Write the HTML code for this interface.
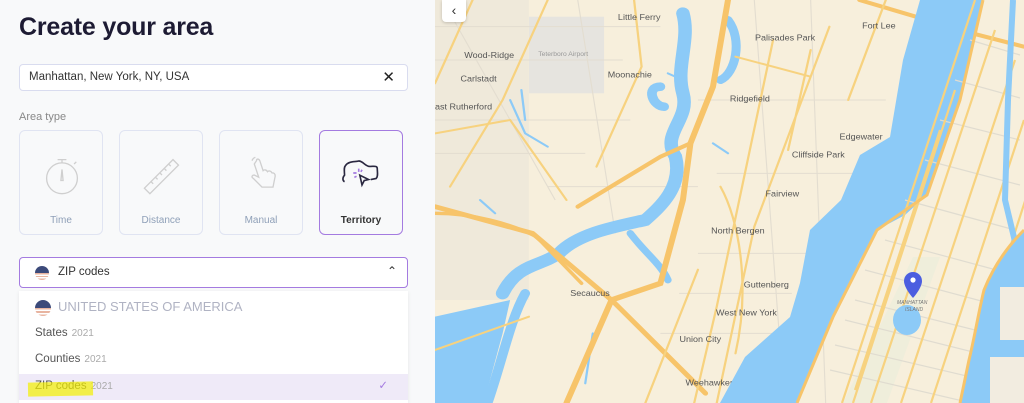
<!DOCTYPE html>
<html><head><meta charset="utf-8"><style>
*{margin:0;padding:0;box-sizing:border-box}
html,body{width:1024px;height:403px;overflow:hidden}
body{font-family:"Liberation Sans",sans-serif;position:relative;background:#f8f9fa}
#left{position:absolute;left:0;top:0;width:435px;height:403px;background:#f8f9fa;overflow:hidden}
h1{position:absolute;left:19px;top:13px;font-size:25px;font-weight:bold;color:#1d1b33;letter-spacing:-0.2px}
.inp{position:absolute;left:19px;top:64px;width:389px;height:27px;background:#fff;border:1px solid #d9dcef;border-radius:4px;font-size:11.5px;color:#333;padding:6px 9px}
.inp .x{position:absolute;right:12px;top:3px;font-size:15px;color:#222}
.lbl{position:absolute;left:19px;top:111px;font-size:11px;color:#888}
.card{position:absolute;top:130px;width:84px;height:105px;border:1px solid #e0e4f2;border-radius:6px;background:#f8f9fa;text-align:center;font-size:10px;color:#8fa0b8}
.card span{position:absolute;left:0;right:0;top:84px}
.card svg{position:absolute;left:20px;top:22px}
.card.sel{border:1.5px solid #a47be0;color:#333;font-weight:bold}
.sel2{position:absolute;left:19px;top:257px;width:389px;height:31px;background:#fff;border:1.5px solid #a47be0;border-radius:4px;font-size:11.5px;color:#333;padding:8px 0 0 38px}
.flag{position:absolute;width:14px;height:14px;border-radius:50%;background:linear-gradient(#3c4a7a 0 50%,#e8b4a0 50% 60%,#fff 60% 70%,#e8b4a0 70% 80%,#fff 80% 90%,#e8b4a0 90%)}
.menu{position:absolute;left:19px;top:291px;width:389px;height:112px;background:#fff;box-shadow:0 1px 4px rgba(0,0,0,.08)}
.menu div{position:absolute;left:0;right:0;font-size:11.5px;color:#555;padding-left:16px}
.menu small{font-size:10px;color:#aaa;margin-left:4px}
.hl{background:#efeaf8}
.hlm{position:absolute;left:28px;top:382px;width:65px;height:14px;background:#f4f000;transform:rotate(-1deg)}
#map{position:absolute;left:435px;top:0;width:589px;height:403px;background:#f7efdc;overflow:hidden}
#map svg{position:absolute;left:0;top:0}
.back{position:absolute;left:442px;top:0;width:24px;height:22px;background:#fff;border-radius:0 0 4px 4px;box-shadow:0 1px 3px rgba(0,0,0,.2);text-align:center;font-size:14px;line-height:20px;color:#333}
</style></head><body>
<div id="left">
<h1>Create your area</h1>
<div class="inp">Manhattan, New York, NY, USA<span class="x">✕</span></div>
<div class="lbl">Area type</div>
<div class="card" style="left:19px"><svg width="44" height="44" viewBox="0 0 40 40" fill="none" stroke="#cfcfcf" stroke-width="1.2"><circle cx="20" cy="23" r="14"/><path d="M16 6h8M20 6v3M20 15l-1 10h2z M31 10l2-2"/></svg><span>Time</span></div>
<div class="card" style="left:119px"><svg width="44" height="44" viewBox="0 0 40 40" fill="none" stroke="#cfcfcf" stroke-width="1.2"><path d="M4 32l26-26 5 5-26 26z M12 28l-2-2M16 24l-2-2M20 20l-2-2M24 16l-2-2M28 12l-2-2"/></svg><span>Distance</span></div>
<div class="card" style="left:219px"><svg width="44" height="44" viewBox="0 0 40 40" fill="none" stroke="#cfcfcf" stroke-width="1.2"><path d="M14 4a4 4 0 0 0-3 3 M13 10l4 12-4-2c-2 0-3 2-1 3l8 8h10l2-10c0-3-2-3-3-3-1-2-3-2-4-1-1-2-3-2-4-1l-3-9c-1-2-3-2-3 0z"/></svg><span>Manual</span></div>
<div class="card sel" style="left:319px"><svg width="48" height="44" viewBox="0 0 44 40" fill="none" stroke="#2a2840" stroke-width="1.5" style="left:18px;top:20px"><path d="M6 28c-2-1-2-4 0-6 0-3-1-7 1-9 3-4 8-3 12-4 4 0 6 5 10 5 4 0 7-1 7 2 0 3 1 7-1 9l-5 1"/><path d="M20 22l8 4-4 1-2 4z" /><path d="M19 16v3M14 20h3M15 24l2-1M22 17l-1 2" stroke="#a47be0"/></svg><span>Territory</span></div>
<div class="sel2"><i class="flag" style="left:15px;top:8px"></i>ZIP codes<span style="position:absolute;right:10px;top:6px;font-size:12px">&#8963;</span></div>
<div class="menu">
<div style="top:8px;font-size:13px;color:#b0b3c3;padding-left:39px"><i class="flag" style="left:16px;top:1px;width:16px;height:16px"></i>UNITED STATES OF AMERICA</div>
<div style="top:36px">States<small>2021</small></div>
<div style="top:62px">Counties<small>2021</small></div>
<div class="hl" style="top:83px;height:26px;padding-top:6px">ZIP codes<small>2021</small><span style="position:absolute;right:20px;top:4px;color:#a47be0">✓</span></div>
</div>
<div class="hlm" style="opacity:.7"></div>
</div>
<div id="map">
<svg width="589" height="403" viewBox="0 0 1568 1209" preserveAspectRatio="none">
<rect width="1568" height="1209" fill="#f7efdc"/>
<rect x="250" y="50" width="200" height="230" fill="#e6e4df"/>
<path d="M0 0h250v900H0z" fill="#efe9da"/>
<g fill="none" stroke="#e3ddd0" stroke-width="3">
<path d="M0 80h600M0 180h500M0 360h520M0 460h400M300 560h400M700 300h500M750 520h400M700 760h400M650 880h300M600 1000h400M20 0l300 600M380 0l100 700M850 0l80 1209M1000 0l40 1209"/>
</g>
<g fill="#8ccaf7">
<path d="M0 950L200 900 180 1000 130 1209H0z"/>
</g>
<g fill="none" stroke="#8ccaf7" stroke-linecap="round">
<path d="M660 40C680 120 640 200 660 280 680 360 600 400 640 470 660 560 600 620 560 660 480 680 380 700 330 760 280 800 220 790 180 880" stroke-width="36"/>
<path d="M780 60c40 60 20 160 -20 180" stroke-width="24"/>
<path d="M600 260c-40 0-20 60 10 60" stroke-width="26"/>
<path d="M520 700c40 60 80 90 100 140" stroke-width="20"/>
<path d="M240 880c-40 80-60 200-100 329" stroke-width="26"/>
<path d="M200 300l40 100 60 40M120 600l40 40M420 1000l-20 150M230 270l10 90M660 240l-40-20M740 430l40 30" stroke-width="6"/>
</g>
<g fill="none" stroke="#f7c46a" stroke-linecap="round">
<path d="M780 0L740 260 680 430 660 600 600 850 470 900 350 1209" stroke-width="16"/>
<path d="M0 620L260 700 470 900 720 1180" stroke-width="14"/>
<path d="M380 620L600 470 680 430" stroke-width="12"/>
<path d="M1130 0l300 100 138 40" stroke-width="12"/>
<path d="M0 640c100 0 200 30 270 70l120 140" stroke-width="10"/>
<path d="M100 0L0 250M300 0L180 300 40 560M530 0l20 200-120 300M900 120l-150 800-60 289M1050 80l-200 600-100 529M800 170l200 60M1200 0L1100 300M1000 150l-60 300M760 560c50 100 80 300 40 500M0 400l200-40 150 240M560 1209l140-400M0 1050l250-100" stroke="#f7d27f" stroke-width="6"/>
</g>
<g font-family="Liberation Sans,sans-serif" font-size="24" fill="#555">
<text x="487" y="60">Little Ferry</text><text x="852" y="122">Palisades Park</text><text x="1137" y="86">Fort Lee</text>
<text x="78" y="174">Wood-Ridge</text><text x="68" y="244">Carlstadt</text><text x="460" y="232">Moonachie</text>
<text x="785" y="305">Ridgefield</text><text x="0" y="328">ast Rutherford</text><text x="1077" y="418">Edgewater</text>
<text x="950" y="473">Cliffside Park</text><text x="880" y="590">Fairview</text><text x="735" y="700">North Bergen</text>
<text x="822" y="862">Guttenberg</text><text x="360" y="888">Secaucus</text><text x="748" y="946">West New York</text>
<text x="651" y="1026">Union City</text><text x="667" y="1157">Weehawken</text>
<text x="275" y="168" font-size="18" fill="#999">Teterboro Airport</text>
</g>
</svg>
<svg width="589" height="403" viewBox="0 0 589 403">
<path d="M485 0L468 60 455 137 425 155 406 200 375 230 365 283 355 317 310 357 285 403H362L398 317 425 260 442 230 470 215 492 195 525 100 548 0z" fill="#8ccaf7"/>
<path d="M478 257L505 257 452 403 408 403z" fill="#efeedb"/>
<g fill="none" stroke="#e0dcd0" stroke-width="1.2">
<path d="M420 300l160 40M410 320l160 40M400 345l170 40M430 270l150 40M450 240l130 35M470 200l110 30M490 160l95 25M505 120l80 20M520 80l65 18M535 40l50 15M395 370l150 35"/>
</g>
<g fill="none" stroke="#f7d27f" stroke-width="2.2">
<path d="M540 0L407 403M560 30L436 403M580 60L466 403M520 90L418 403M589 120L496 403M600 170L525 403M505 130L420 390"/>
</g>
<path d="M548 0L525 100 492 195 442 230 398 317 362 403" fill="none" stroke="#f7c46a" stroke-width="3"/>
<path d="M578 0l-5 100-3 100 12 50" fill="none" stroke="#8ccaf7" stroke-width="6"/>
<path d="M589 230c-15 15-30 35-40 60-5 20-10 50-15 70L525 403H589z" fill="#8ccaf7"/>
<path d="M565 287h24v53h-24zM555 357h34v46h-34z" fill="#f2ece0"/>
<path d="M589 230c-15 15-30 35-40 60-5 20-10 50-15 70L525 403" fill="none" stroke="#f7c46a" stroke-width="3"/>
<ellipse cx="472" cy="320" rx="14" ry="15" fill="#8ccaf7"/>
<path d="M478 272a9 9 0 0 1 9 9c0 7-9 17-9 17s-9-10-9-17a9 9 0 0 1 9-9z" fill="#4b5ee0"/>
<circle cx="478" cy="280" r="2.6" fill="#fff"/>
<text x="462" y="304" font-family="Liberation Sans,sans-serif" font-size="5" fill="#777" font-style="italic">MANHATTAN</text>
<text x="470" y="311" font-family="Liberation Sans,sans-serif" font-size="5" fill="#777" font-style="italic">ISLAND</text>
</svg>
</div>
<div class="back">&#8249;</div>
</body></html>
